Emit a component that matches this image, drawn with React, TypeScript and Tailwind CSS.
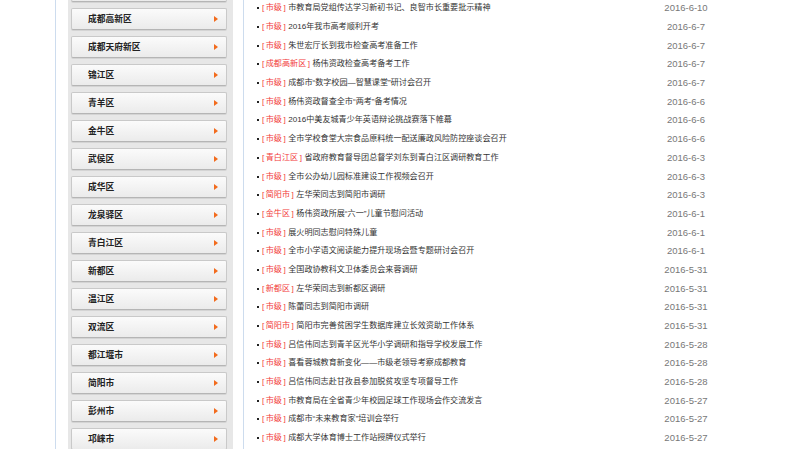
import React from 'react';

// first entry is the button scrolled off the top, only its bottom edge shows
const districts = [
  '', '成都高新区', '成都天府新区', '锦江区', '青羊区', '金牛区', '武侯区', '成华区', '龙泉驿区',
  '青白江区', '新都区', '温江区', '双流区', '都江堰市', '简阳市', '彭州市', '邛崃市',
];

const news: [string, string, string][] = [
  ['市级', '市教育局党组传达学习新初书记、良智市长重要批示精神', '2016-6-10'],
  ['市级', '2016年我市高考顺利开考', '2016-6-7'],
  ['市级', '朱世宏厅长到我市检查高考准备工作', '2016-6-7'],
  ['成都高新区', '杨伟资政检查高考备考工作', '2016-6-7'],
  ['市级', '成都市“数字校园—智慧课堂”研讨会召开', '2016-6-7'],
  ['市级', '杨伟资政督查全市“两考”备考情况', '2016-6-6'],
  ['市级', '2016中美友城青少年英语辩论挑战赛落下帷幕', '2016-6-6'],
  ['市级', '全市学校食堂大宗食品原料统一配送廉政风险防控座谈会召开', '2016-6-6'],
  ['青白江区', '省政府教育督导团总督学刘东到青白江区调研教育工作', '2016-6-3'],
  ['市级', '全市公办幼儿园标准建设工作视频会召开', '2016-6-3'],
  ['简阳市', '左华荣同志到简阳市调研', '2016-6-3'],
  ['金牛区', '杨伟资政所展“六一”儿童节慰问活动', '2016-6-1'],
  ['市级', '展火明同志慰问特殊儿童', '2016-6-1'],
  ['市级', '全市小学语文阅读能力提升现场会暨专题研讨会召开', '2016-6-1'],
  ['市级', '全国政协教科文卫体委员会来蓉调研', '2016-5-31'],
  ['新都区', '左华荣同志到新都区调研', '2016-5-31'],
  ['市级', '陈蕾同志到简阳市调研', '2016-5-31'],
  ['简阳市', '简阳市完善贫困学生数据库建立长效资助工作体系', '2016-5-31'],
  ['市级', '吕信伟同志到青羊区光华小学调研和指导学校发展工作', '2016-5-28'],
  ['市级', '喜看蓉城教育新变化——市级老领导考察成都教育', '2016-5-28'],
  ['市级', '吕信伟同志赴甘孜县参加脱贫攻坚专项督导工作', '2016-5-28'],
  ['市级', '市教育局在全省青少年校园足球工作现场会作交流发言', '2016-5-27'],
  ['市级', '成都市“未来教育家”培训会举行', '2016-5-27'],
  ['市级', '成都大学体育博士工作站授牌仪式举行', '2016-5-27'],
];

const cjk = { fontFamily: '"Noto Sans CJK SC", "Liberation Sans", sans-serif' };
const mixed = { fontFamily: '"Liberation Sans", "Noto Sans CJK SC", sans-serif' };

function DistrictButton({ name }: { name: string }) {
  return (
    <div className="flex h-[22px] shrink-0 items-center justify-between rounded-[2px] border border-[#c9c9c9] border-b-[#b5b5b5] bg-gradient-to-b from-[#fbfbfb] to-[#ebebeb] pl-[16px] pr-[8px] shadow-[0_1px_0_#d4d4d4]">
      <span className="text-[8.75px] font-bold leading-[12px] text-[#222]">{name}</span>
      <span className="h-0 w-0 border-y-[3px] border-l-[4px] border-y-transparent border-l-[#f26b1d]" />
    </div>
  );
}

export default function App() {
  return (
    <div className="flex h-[449px] w-[800px] overflow-hidden bg-white" style={cjk}>
      <div className="w-[55px] shrink-0" />
      <div className="w-px shrink-0 bg-[#cddcee]" />
      <div className="w-[12px] shrink-0" />

      {/* Sidebar */}
      <div className="w-[165px] shrink-0 bg-[#e7e7e7] pl-[3px] pr-[6px]">
        <div className="-mt-[20px] flex flex-col gap-[6px]">
          {districts.map((d, i) => <DistrictButton key={i} name={d} />)}
        </div>
      </div>

      <div className="w-[10px] shrink-0" />
      <div className="w-px shrink-0 bg-[#cddcee]" />

      {/* News list */}
      <div className="w-[478px] shrink-0 pl-[13px]">
        <ul className="-mt-[1px]">
          {news.map(([tag, title, date], i) => (
            <li key={i} className="flex h-[18.7px] items-center">
              <span className="mr-[3px] h-[2px] w-[2px] shrink-0 bg-[#222]" />
              <span className="flex-1 truncate text-[8.1px] leading-[12px] text-[#333]" style={mixed}>
                <span className="text-[#f23a3a]">[<span className="mx-[1.5px]">{tag}</span>]</span>
                <span className="ml-[2.5px]">{title}</span>
              </span>
              <span className="w-[72px] shrink-0 text-center text-[9.5px] leading-[12px] text-[#777]" style={{ fontFamily: '"Liberation Sans", sans-serif' }}>
                {date}
              </span>
            </li>
          ))}
        </ul>
      </div>
    </div>
  );
}
